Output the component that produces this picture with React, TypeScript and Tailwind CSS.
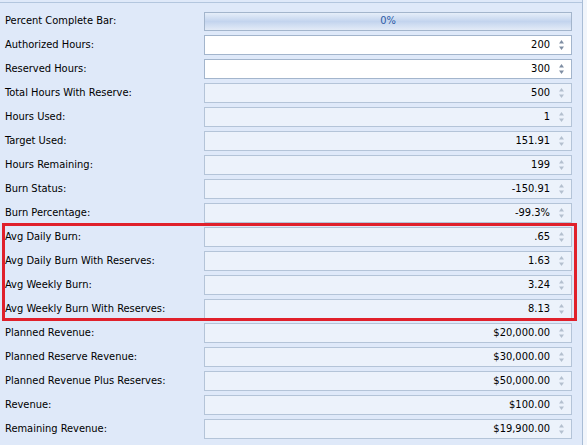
import React from 'react';

type Row = { label: string; value: string; editable?: boolean; bar?: boolean };

const rows: Row[] = [
  { label: 'Percent Complete Bar:', value: '0%', bar: true },
  { label: 'Authorized Hours:', value: '200', editable: true },
  { label: 'Reserved Hours:', value: '300', editable: true },
  { label: 'Total Hours With Reserve:', value: '500' },
  { label: 'Hours Used:', value: '1' },
  { label: 'Target Used:', value: '151.91' },
  { label: 'Hours Remaining:', value: '199' },
  { label: 'Burn Status:', value: '-150.91' },
  { label: 'Burn Percentage:', value: '-99.3%' },
  { label: 'Avg Daily Burn:', value: '.65' },
  { label: 'Avg Daily Burn With Reserves:', value: '1.63' },
  { label: 'Avg Weekly Burn:', value: '3.24' },
  { label: 'Avg Weekly Burn With Reserves:', value: '8.13' },
  { label: 'Planned Revenue:', value: '$20,000.00' },
  { label: 'Planned Reserve Revenue:', value: '$30,000.00' },
  { label: 'Planned Revenue Plus Reserves:', value: '$50,000.00' },
  { label: 'Revenue:', value: '$100.00' },
  { label: 'Remaining Revenue:', value: '$19,900.00' },
];

function Spin({ active }: { active?: boolean }) {
  const c = active ? '#7f8ea3' : '#b4c0cf';
  return (
    <svg width="7" height="14" viewBox="0 0 7 14" className="shrink-0">
      <path d="M3.5 2 L6 5.5 H1 Z" fill={c} />
      <path d="M1 8.5 H6 L3.5 12 Z" fill={c} />
    </svg>
  );
}

export default function App() {
  return (
    <div
      className="relative w-[587px] h-[445px] overflow-hidden bg-[#f1f5fb] flex text-[11px] text-black"
      style={{ fontFamily: '"DejaVu Sans Condensed", "DejaVu Sans", sans-serif' }}
    >
      <div className="w-[583px] h-full bg-[#dfe9f9] border-r border-[#a9bdd6] flex flex-col">
        <div className="mt-[2px] border-t border-[#b3c6de] pt-[6px] flex flex-col">
          {rows.map((r) => (
            <div key={r.label} className="flex items-center h-[24px]">
              <div className="w-[204px] pl-[5px] whitespace-nowrap">{r.label}</div>
              {r.bar ? (
                <div className="w-[368px] h-[19px] border border-[#a3b5cc] bg-gradient-to-b from-[#e6eef9] via-[#c3d4ee] to-[#e3ebf7] flex items-center justify-center text-[#2d5aa5]">
                  {r.value}
                </div>
              ) : (
                <div
                  className={
                    'w-[368px] h-[20px] border flex items-center justify-end pr-[6px] gap-[8px] ' +
                    (r.editable ? 'bg-white border-[#a3b5cc]' : 'bg-[#ecf2fb] border-[#b4c4d8]')
                  }
                >
                  <span>{r.value}</span>
                  <Spin active={r.editable} />
                </div>
              )}
            </div>
          ))}
        </div>
      </div>
      <div className="absolute left-[2px] top-[223px] w-[575px] h-[98px] border-[3px] border-[#e0202b] pointer-events-none" />
    </div>
  );
}
